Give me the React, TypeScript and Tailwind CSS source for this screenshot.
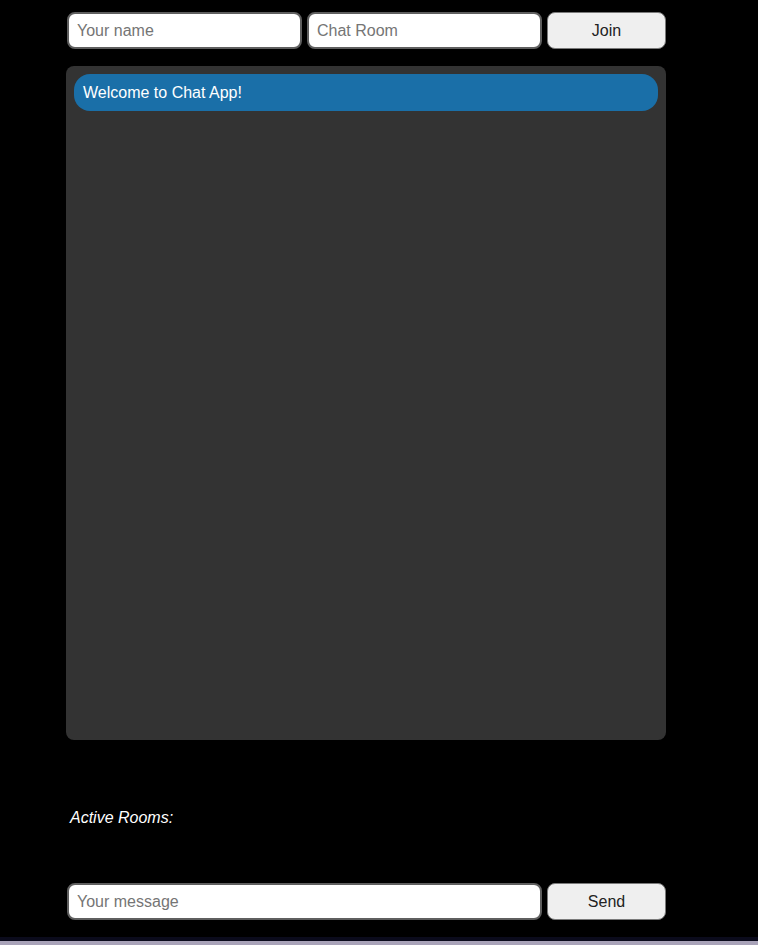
export default function App() {
  return (
    <div className="flex h-[945px] flex-col bg-black font-['Liberation_Sans',Arial,sans-serif]">
      <div className="flex-1">
        <div className="ml-[66px] w-[600px] pt-3">
          {/* --- Join row --- */}
          <div className="flex h-[37px] gap-[5px] pl-px">
            <input
              placeholder="Your name"
              className="w-[235px] rounded-lg border-2 border-[#5f5f5f] bg-white px-2 text-base text-black placeholder:text-[#757575] outline-none"
            />
            <input
              placeholder="Chat Room"
              className="w-[235px] rounded-lg border-2 border-[#5f5f5f] bg-white px-2 text-base text-black placeholder:text-[#757575] outline-none"
            />
            <button className="w-[119px] rounded-lg border border-[#7a7a7a] bg-[#efefef] text-base text-[#222]">
              Join
            </button>
          </div>

          {/* --- Messages --- */}
          <div className="mt-[17px] h-[674px] rounded-lg bg-[#333333] p-2">
            <div className="flex h-[37px] items-center rounded-[16px] bg-[#1a6fa8] px-[9px] text-base text-white">
              Welcome to Chat App!
            </div>
          </div>

          <p className="mt-[69px] pl-1 text-base italic leading-[18px] text-white">Active Rooms:</p>

          {/* --- Send row --- */}
          <div className="mt-[56px] flex h-[37px] gap-[5px] pl-px">
            <input
              placeholder="Your message"
              className="w-[475px] rounded-lg border-2 border-[#5f5f5f] bg-white px-2 text-base text-black placeholder:text-[#757575] outline-none"
            />
            <button className="w-[119px] rounded-lg border border-[#7a7a7a] bg-[#efefef] text-base text-[#222]">
              Send
            </button>
          </div>
        </div>
      </div>
      <div className="h-1 bg-[#0b0b1c]" />
      <div className="h-1 bg-[#a9a3b9]" />
    </div>
  );
}
